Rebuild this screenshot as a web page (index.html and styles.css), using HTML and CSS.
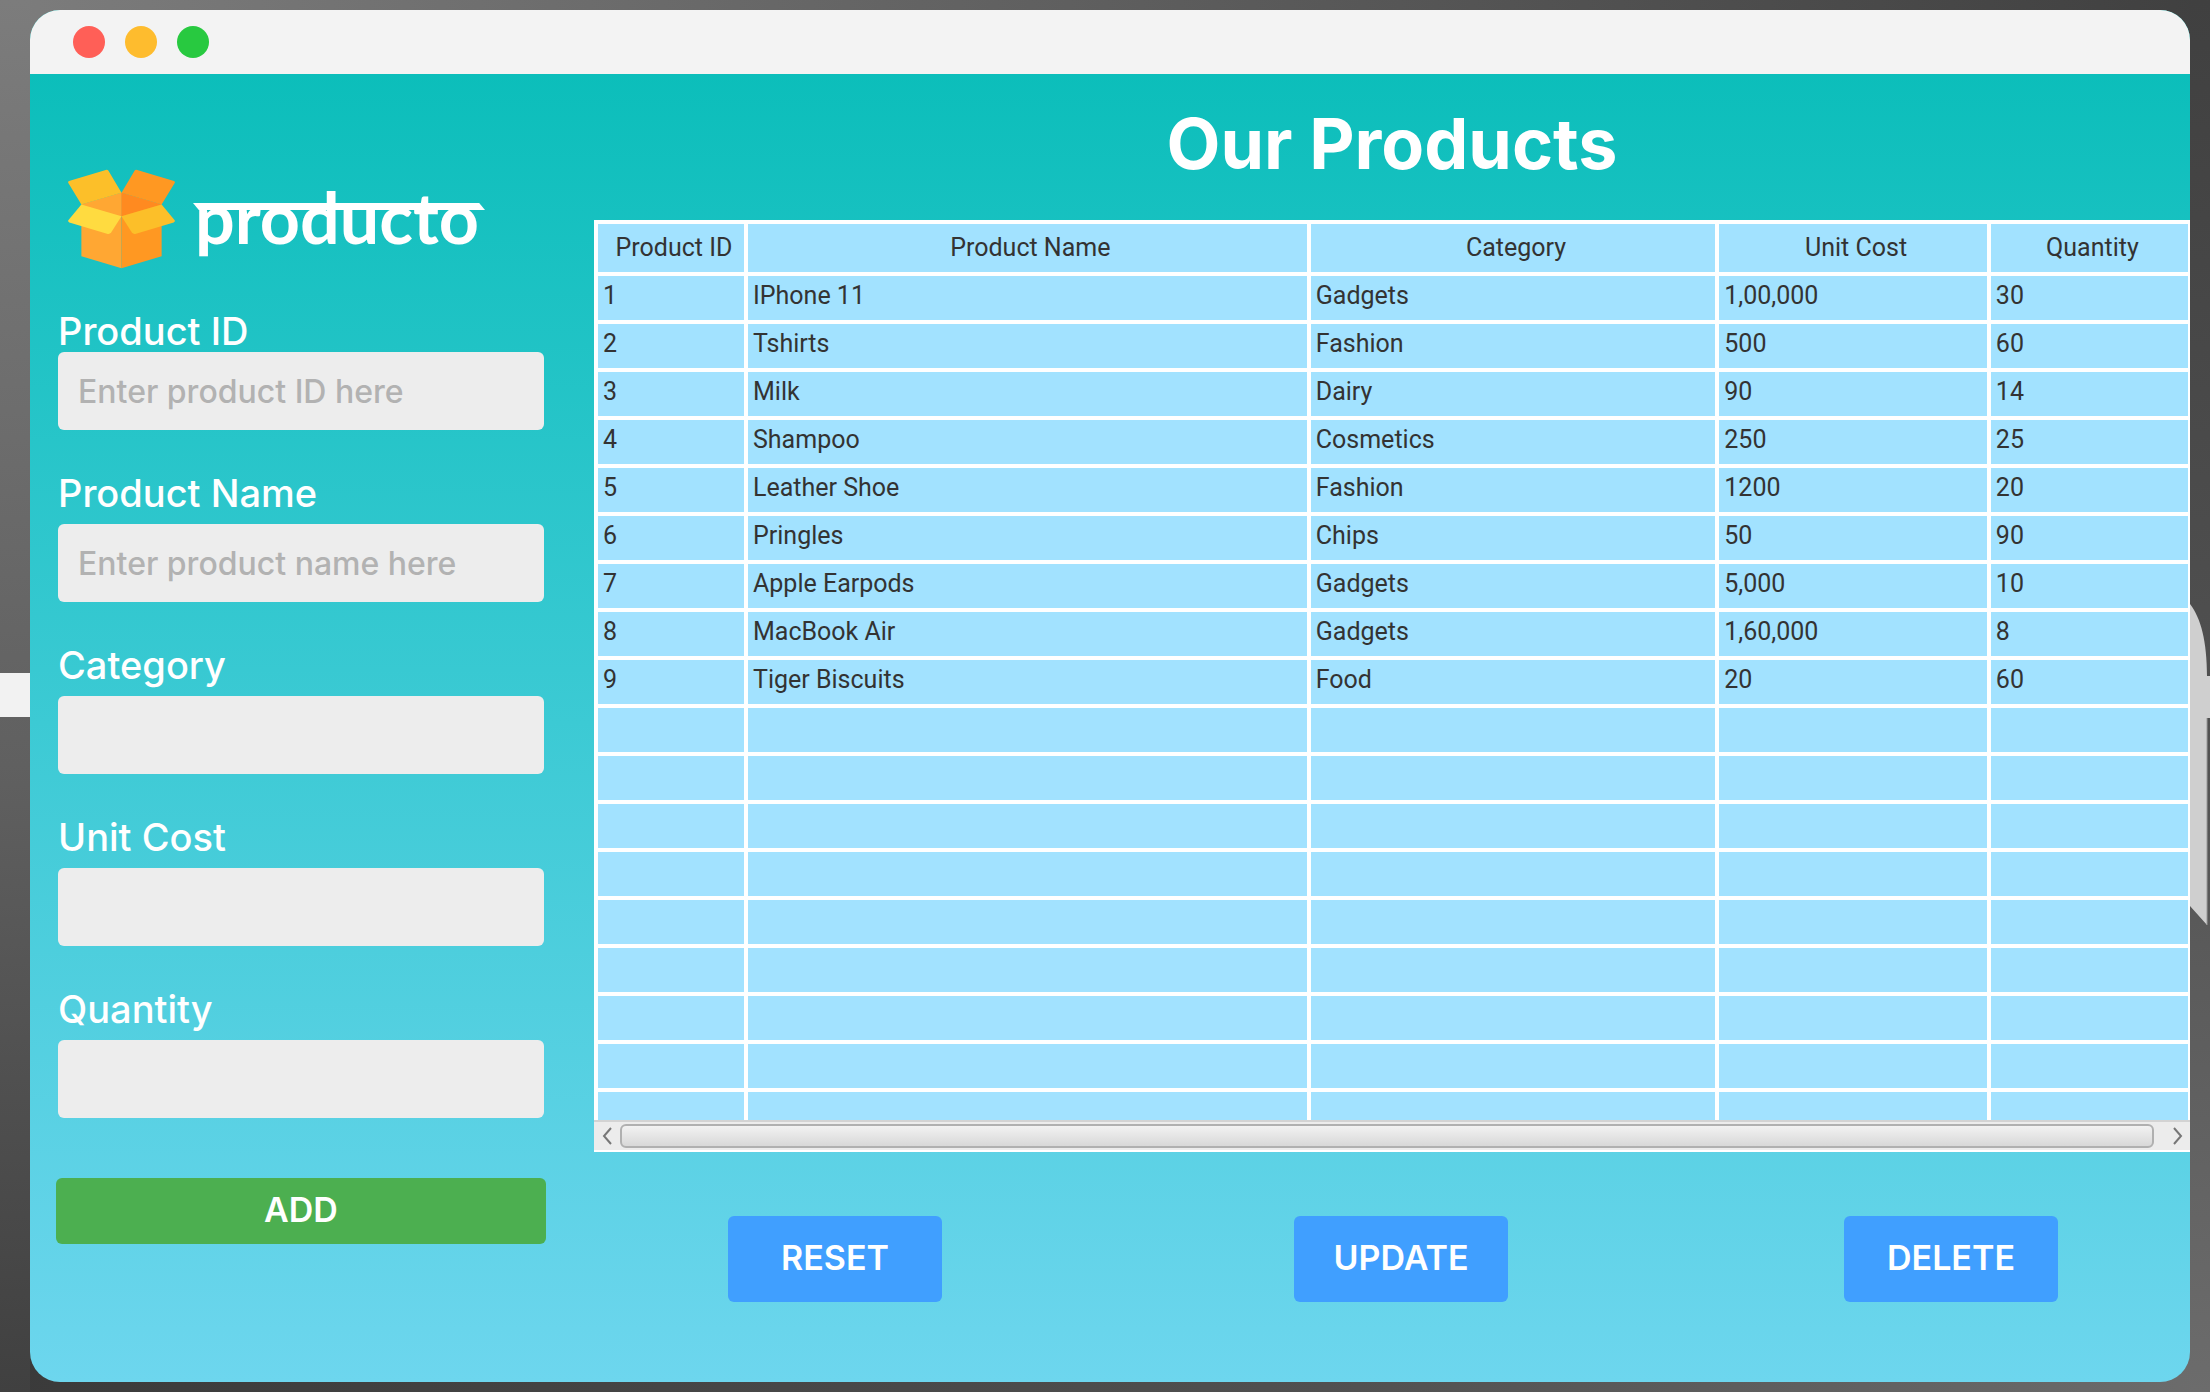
FILE: index.html
```html
<!DOCTYPE html>
<html lang="en">
<head>
<meta charset="utf-8">
<title>Producto</title>
<link rel="stylesheet" href="styles.css">
</head>
<body>
<svg class="backdrop-left" viewBox="0 0 30 44" aria-hidden="true"><path d="M0 0H30V44H0z" fill="#f2f2f2"/></svg>
<svg class="backdrop-right" viewBox="0 0 20 322" aria-hidden="true"><path d="M0 0C11 14 17 38 17 72H20V114H17V321L0 302z" fill="#cfcfcf"/><path d="M17 114V321" stroke="#9a9a9a"/></svg>
<div class="window">
  <header class="titlebar">
    <span class="light light-red"></span>
    <span class="light light-yellow"></span>
    <span class="light light-green"></span>
  </header>
  <div class="content">
    <aside class="sidebar">
      <div class="brand">
        <svg class="brand-icon" viewBox="53 58 320 297" aria-hidden="true">
          <path d="M93 163L213 128V354L93 318z" fill="#ffa733"/>
          <path d="M333 163L213 128V354L333 318z" fill="#ff9822"/>
          <path d="M93 163L213 128V198z" fill="#ffa733"/>
          <path d="M333 163L213 128V198z" fill="#ff8a20"/>
          <path d="M54 99Q52 95 56 93L166 60Q171 58 174 62L213 128L93 163z" fill="#fcbf29"/>
          <path d="M372 99Q374 95 370 93L260 60Q255 58 252 62L213 128L333 163z" fill="#ff9822"/>
          <path d="M93 163L213 198L182 247Q178 252 172 251L57 217Q52 215 54 210z" fill="#ffdb40"/>
          <path d="M333 163L213 198L244 247Q248 252 254 251L369 217Q374 215 372 210z" fill="#fcbf29"/>
        </svg>
        <span class="brand-name">producto</span>
      </div>
      <form class="form">
        <div class="field field-tight">
          <label for="product-id">Product ID</label>
          <input id="product-id" type="text" placeholder="Enter product ID here">
        </div>
        <div class="field">
          <label for="product-name">Product Name</label>
          <input id="product-name" type="text" placeholder="Enter product name here">
        </div>
        <div class="field">
          <label for="category">Category</label>
          <input id="category" type="text">
        </div>
        <div class="field">
          <label for="unit-cost">Unit Cost</label>
          <input id="unit-cost" type="text">
        </div>
        <div class="field">
          <label for="quantity">Quantity</label>
          <input id="quantity" type="text">
        </div>
        <button class="button button-add" type="button">ADD</button>
      </form>
    </aside>
    <main class="main">
      <h1 class="title">Our Products</h1>
      <div class="table-frame">
        <div class="table-view">
          <table class="products">
            <colgroup><col class="col-id"><col class="col-name"><col class="col-category"><col class="col-cost"><col></colgroup>
            <thead>
              <tr><th>Product ID</th><th>Product Name</th><th>Category</th><th>Unit Cost</th><th>Quantity</th></tr>
            </thead>
            <tbody>
              <tr><td>1</td><td>IPhone 11</td><td>Gadgets</td><td>1,00,000</td><td>30</td></tr>
              <tr><td>2</td><td>Tshirts</td><td>Fashion</td><td>500</td><td>60</td></tr>
              <tr><td>3</td><td>Milk</td><td>Dairy</td><td>90</td><td>14</td></tr>
              <tr><td>4</td><td>Shampoo</td><td>Cosmetics</td><td>250</td><td>25</td></tr>
              <tr><td>5</td><td>Leather Shoe</td><td>Fashion</td><td>1200</td><td>20</td></tr>
              <tr><td>6</td><td>Pringles</td><td>Chips</td><td>50</td><td>90</td></tr>
              <tr><td>7</td><td>Apple Earpods</td><td>Gadgets</td><td>5,000</td><td>10</td></tr>
              <tr><td>8</td><td>MacBook Air</td><td>Gadgets</td><td>1,60,000</td><td>8</td></tr>
              <tr><td>9</td><td>Tiger Biscuits</td><td>Food</td><td>20</td><td>60</td></tr>
              <tr><td></td><td></td><td></td><td></td><td></td></tr>
              <tr><td></td><td></td><td></td><td></td><td></td></tr>
              <tr><td></td><td></td><td></td><td></td><td></td></tr>
              <tr><td></td><td></td><td></td><td></td><td></td></tr>
              <tr><td></td><td></td><td></td><td></td><td></td></tr>
              <tr><td></td><td></td><td></td><td></td><td></td></tr>
              <tr><td></td><td></td><td></td><td></td><td></td></tr>
              <tr><td></td><td></td><td></td><td></td><td></td></tr>
              <tr><td></td><td></td><td></td><td></td><td></td></tr>
            </tbody>
          </table>
        </div>
        <div class="scrollbar">
          <button class="scroll-arrow" type="button" aria-label="Scroll left"><svg viewBox="0 0 10 18" aria-hidden="true"><path d="M9 1L2 9L9 17" fill="none" stroke="#777" stroke-width="2"/></svg></button>
          <div class="scroll-thumb"></div>
          <button class="scroll-arrow" type="button" aria-label="Scroll right"><svg viewBox="0 0 10 18" aria-hidden="true"><path d="M1 1L8 9L1 17" fill="none" stroke="#777" stroke-width="2"/></svg></button>
        </div>
      </div>
      <div class="actions">
        <button class="button button-action" type="button">RESET</button>
        <button class="button button-action" type="button">UPDATE</button>
        <button class="button button-action" type="button">DELETE</button>
      </div>
    </main>
  </div>
</div>
</body>
</html>
```
FILE: styles.css
```css
* {
  box-sizing: border-box;
}

body {
  margin: 0;
  min-height: 100vh;
  display: flex;
  padding: 10px 20px 10px 30px;
  position: relative;
  overflow: hidden;
  font-family: Inter, "Liberation Sans", sans-serif;
  background:
    linear-gradient(to bottom, #404040, #505050 50%, #6c6c6c) right / 20px 100% no-repeat,
    linear-gradient(to bottom, #7c7c7c, #606060 55%, #404040) left / 30px 100% no-repeat,
    linear-gradient(to right, #7c7c7c, #6a6a6a 30%, #404040) top / 100% 50% no-repeat,
    linear-gradient(to right, #3a3a3a, #505050 60%, #6c6c6c) bottom / 100% 50% no-repeat;
}

/* Shapes of the desktop wallpaper that show on either side of the window */
.backdrop-left,
.backdrop-right {
  position: absolute;
}

.backdrop-left {
  left: 0;
  top: 673px;
  width: 30px;
}

.backdrop-right {
  right: 0;
  top: 604px;
  width: 20px;
}

.window {
  position: relative;
  flex: 1;
  display: flex;
  flex-direction: column;
  border-radius: 30px;
  overflow: hidden;
  background: linear-gradient(#07bdb8, #6dd6ee);
}

.titlebar {
  display: flex;
  align-items: center;
  gap: 20px;
  height: 64px;
  padding-left: 43px;
  background: #f3f3f3;
}

.light {
  width: 32px;
  height: 32px;
  border-radius: 50%;
}

.light-red {
  background: #ff5f57;
}

.light-yellow {
  background: #febc2e;
}

.light-green {
  background: #28c940;
}

.content {
  flex: 1;
  display: grid;
  grid-template-columns: 564px 1fr;
}

.sidebar {
  padding: 95px 48px 0 26px;
}

.brand {
  display: flex;
  align-items: center;
  gap: 20px;
  padding-left: 12px;
  height: 100px;
}

.brand-icon {
  width: 107px;
  height: 100px;
}

.brand-name {
  position: relative;
  color: #fff;
  font-family: Lato, sans-serif;
  font-size: 70px;
  font-weight: 700;
  line-height: 76px;
  padding-bottom: 4px;
}

/* Headline stroke that the letters hang from */
.brand-name::before {
  content: "";
  position: absolute;
  left: -2px;
  right: -6px;
  top: 24px;
  height: 7px;
  background: #fff;
  clip-path: polygon(0 0, 98% 0, 100% 100%, 2% 100%);
}

.form {
  display: flex;
  flex-direction: column;
  padding-top: 43px;
}

.field {
  display: flex;
  flex-direction: column;
  gap: 12px;
  margin: 0 2px 44px;
}

.field-tight {
  gap: 2px;
}

.field label {
  color: #fff;
  font-size: 38px;
  font-weight: 500;
  line-height: 38px;
}

.field input {
  height: 78px;
  padding: 0 20px;
  border: 0;
  border-radius: 6px;
  background: #ededed;
  color: #333;
  font: 500 32px Inter, sans-serif;
}

.field input::placeholder {
  color: #b2b2b2;
  opacity: 1;
}

.button {
  border: 0;
  border-radius: 6px;
  padding: 0 0 3px;
  color: #fff;
  font: 600 34px Inter, sans-serif;
}

.button-add {
  height: 66px;
  margin-top: 16px;
  background: #4caf50;
}

.button-action {
  width: 214px;
  height: 86px;
  background: #409fff;
}

.main {
  display: flex;
  flex-direction: column;
  min-width: 0;
}

.title {
  margin: 0;
  padding-top: 28px;
  height: 146px;
  color: #fff;
  font-size: 70px;
  font-weight: 700;
  line-height: 84px;
  text-align: center;
}

.table-frame {
  height: 932px;
  display: flex;
  flex-direction: column;
  padding-bottom: 2px;
  background: #fff;
}

.table-view {
  flex: 1;
  min-height: 0;
  overflow: hidden;
}

.products {
  width: calc(100% + 2px);
  table-layout: fixed;
  border-collapse: separate;
  border-spacing: 4px;
  color: #333;
  font-family: Roboto, sans-serif;
  font-size: 25px;
  line-height: 32px;
}

.col-id {
  width: 146px;
}

.col-name {
  width: 35.5%;
}

.col-category {
  width: 25.7%;
}

.col-cost {
  width: 17%;
}

.products th,
.products td {
  height: 44px;
  padding: 4px 5px 8px;
  background: #a2e2ff;
  text-align: left;
}

.products th {
  height: 48px;
  padding: 8px 0 8px 6px;
  font-weight: 400;
  text-align: center;
}

.scrollbar {
  display: flex;
  align-items: center;
  height: 30px;
  padding: 0 2px;
  border-top: 2px solid #d3d3d3;
  background: #ececec;
}

.scroll-arrow {
  width: 24px;
  height: 26px;
  padding: 0 2px 0 0;
  border: 0;
  background: none;
}

.scroll-arrow:last-child {
  width: 28px;
  padding: 0 0 0 8px;
}

.scroll-arrow svg {
  display: block;
  margin: auto;
  width: 10px;
  height: 18px;
}

.scroll-thumb {
  flex: 1;
  height: 24px;
  margin-right: 6px;
  border: 2px solid #b0b0b0;
  border-radius: 6px;
  background: linear-gradient(#f2f2f2, #d8d8d8);
}

.actions {
  display: grid;
  grid-template-columns: 566fr 550fr 214px;
  padding: 64px 132px 80px 134px;
}
```
